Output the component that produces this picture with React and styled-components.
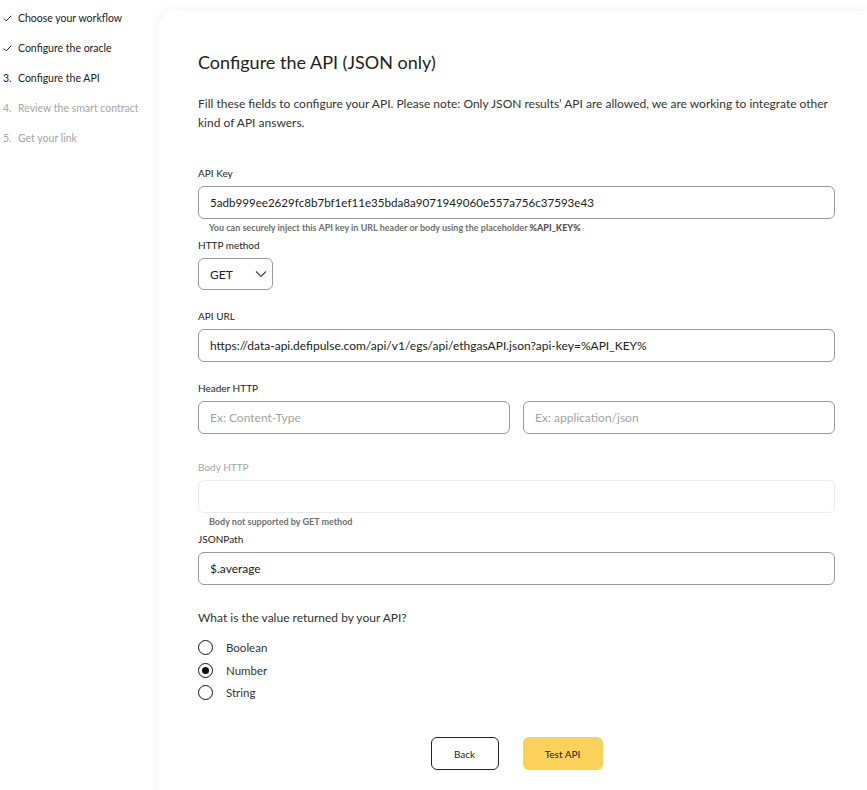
import React from "react";
import styled, { createGlobalStyle } from "styled-components";

const Global = createGlobalStyle`
  html, body {
    margin: 0;
    background: #fff;
    overflow: hidden;
  }
  * { box-sizing: border-box; }
`;

const font = `"Lato", "Liberation Sans", sans-serif`;

const Page = styled.div`
  display: flex;
  width: 875px;
  font-family: ${font};
  color: #222;
`;

const Steps = styled.ol`
  list-style: none;
  margin: 0;
  padding: 9px 0 0 3px;
  width: 159px;
  flex-shrink: 0;
  display: flex;
  flex-direction: column;
  gap: 13px;
`;

const Step = styled.li`
  display: flex;
  align-items: center;
  height: 17px;
  font-size: 10.5px;
  color: ${p => (p.$todo ? "#a6a6a6" : "#222")};
`;

const StepMark = styled.span`
  width: 15px;
  flex-shrink: 0;
`;

const Card = styled.div`
  flex: 1;
  margin-top: 11px;
  min-height: 800px;
  border-radius: 16px 0 0 0;
  background: #fff;
  box-shadow: 0 0 14px rgba(0, 0, 0, 0.06);
  padding: 40px 40px 19px 39px;
  display: flex;
  flex-direction: column;
`;

const Title = styled.h1`
  margin: 0;
  font-size: 18px;
  font-weight: 400;
  line-height: 22px;
  color: #222;
`;

const Intro = styled.p`
  margin: 21px 0 0;
  font-size: 12px;
  line-height: 19px;
  color: #333;
`;

const Label = styled.div`
  font-size: 10px;
  line-height: 13px;
  color: ${p => (p.$disabled ? "#a6a6a6" : "#222")};
  margin-top: ${p => p.$top}px;
  margin-bottom: 6px;
`;

const Input = styled.input`
  display: block;
  width: 100%;
  height: 33px;
  border: 1px solid ${p => (p.disabled ? "#ececec" : "#9a9a9a")};
  border-radius: 6px;
  background: #fff;
  padding: 0 11px;
  font-family: ${font};
  font-size: ${p => p.$size || 12}px;
  color: #222;
  outline: none;
  &::placeholder { color: #a3a3a3; }
`;

const Hint = styled.div`
  margin: 3px 0 0 11px;
  font-size: 9px;
  font-weight: 700;
  line-height: 11px;
  color: #707070;
  b { color: #555; }
`;

const Select = styled.div`
  width: 75px;
  height: 32px;
  border: 1px solid #9a9a9a;
  border-radius: 6px;
  display: flex;
  align-items: center;
  justify-content: space-between;
  padding: 0 4px 0 11px;
  font-size: 12px;
  svg { display: block; }
`;

const Pair = styled.div`
  display: flex;
  gap: 13px;
`;

const Question = styled.div`
  margin-top: 25px;
  font-size: 12px;
  color: #333;
`;

const Radios = styled.div`
  margin-top: 14px;
  display: flex;
  flex-direction: column;
  gap: 5.5px;
`;

const Radio = styled.label`
  display: flex;
  align-items: center;
  gap: 13px;
  height: 17px;
  font-size: 11.5px;
  color: #333;
`;

const Dot = styled.span`
  width: 15px;
  height: 15px;
  border: 1.5px solid #111;
  border-radius: 50%;
  display: flex;
  align-items: center;
  justify-content: center;
  &::after {
    content: "";
    width: 7px;
    height: 7px;
    border-radius: 50%;
    background: ${p => (p.$on ? "#111" : "transparent")};
  }
`;

const Actions = styled.div`
  margin-top: 36px;
  display: flex;
  justify-content: center;
  gap: 24px;
`;

const Button = styled.button`
  height: 33px;
  width: ${p => p.$width}px;
  border-radius: 6px;
  font-family: ${font};
  font-size: 10px;
  color: #222;
  cursor: pointer;
  border: ${p => (p.$primary ? "none" : "1px solid #222")};
  background: ${p => (p.$primary ? "#fcd15a" : "#fff")};
`;

const Check = () => (
  <svg width="9" height="7" viewBox="0 0 9 7" fill="none">
    <path d="M0.8 3.4 L3.2 5.8 L8.2 0.8" stroke="#222" strokeWidth="1" />
  </svg>
);

const steps = [
  { mark: <Check />, text: "Choose your workflow" },
  { mark: <Check />, text: "Configure the oracle" },
  { mark: "3.", text: "Configure the API" },
  { mark: "4.", text: "Review the smart contract", todo: true },
  { mark: "5.", text: "Get your link", todo: true },
];

export default function App() {
  return (
    <Page>
      <Global />
      <Steps>
        {steps.map(s => (
          <Step key={s.text} $todo={s.todo}>
            <StepMark>{s.mark}</StepMark>
            {s.text}
          </Step>
        ))}
      </Steps>
      <Card>
        <Title>Configure the API (JSON only)</Title>
        <Intro>
          Fill these fields to configure your API. Please note: Only JSON results’ API are
          allowed, we are working to integrate other kind of API answers.
        </Intro>

        <Label $top={35}>API Key</Label>
        <Input
          readOnly
          $size={11.6}
          defaultValue="5adb999ee2629fc8b7bf1ef11e35bda8a9071949060e557a756c37593e43"
        />
        <Hint>
          You can securely inject this API key in URL header or body using the placeholder{" "}
          <b>%API_KEY%</b>
        </Hint>

        <Label $top={6}>HTTP method</Label>
        <Select>
          GET
          <svg width="14" height="14" viewBox="0 0 14 14" fill="none">
            <path d="M2 4.5 L7 9.5 L12 4.5" stroke="#444" strokeWidth="1.2" />
          </svg>
        </Select>

        <Label $top={20}>API URL</Label>
        <Input
          readOnly
          defaultValue="https://data-api.defipulse.com/api/v1/egs/api/ethgasAPI.json?api-key=%API_KEY%"
        />

        <Label $top={20}>Header HTTP</Label>
        <Pair>
          <Input placeholder="Ex: Content-Type" />
          <Input placeholder="Ex: application/json" />
        </Pair>

        <Label $top={27} $disabled>Body HTTP</Label>
        <Input disabled />
        <Hint>Body not supported by GET method</Hint>

        <Label $top={6}>JSONPath</Label>
        <Input readOnly defaultValue="$.average" />

        <Question>What is the value returned by your API?</Question>
        <Radios>
          <Radio><Dot />Boolean</Radio>
          <Radio><Dot $on />Number</Radio>
          <Radio><Dot />String</Radio>
        </Radios>

        <Actions>
          <Button $width={68}>Back</Button>
          <Button $width={80} $primary>Test API</Button>
        </Actions>
      </Card>
    </Page>
  );
}
